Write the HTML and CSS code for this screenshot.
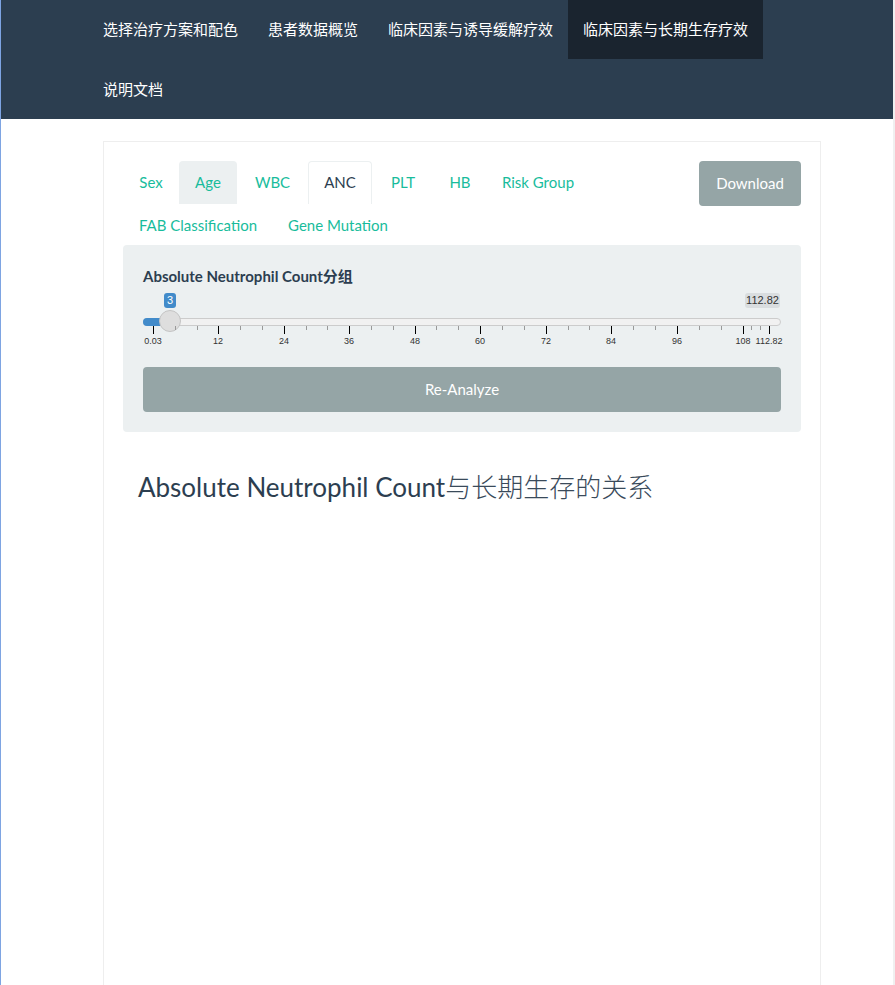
FILE: index.html
```html
<!DOCTYPE html>
<html lang="zh">
<head>
<meta charset="utf-8">
<title>临床因素与长期生存疗效</title>
<link rel="stylesheet" href="styles.css">
</head>
<body>
<nav class="navbar">
  <ul class="nav-list">
    <li><a href="#">选择治疗方案和配色</a></li>
    <li><a href="#">患者数据概览</a></li>
    <li><a href="#">临床因素与诱导缓解疗效</a></li>
    <li class="active"><a href="#">临床因素与长期生存疗效</a></li>
    <li><a href="#">说明文档</a></li>
  </ul>
</nav>
<main class="panel">
  <div class="tab-row">
    <ul class="tabs">
      <li class="t-sex"><a href="#">Sex</a></li>
      <li class="t-age hover"><a href="#">Age</a></li>
      <li class="t-wbc"><a href="#">WBC</a></li>
      <li class="t-anc active"><a href="#">ANC</a></li>
      <li class="t-plt"><a href="#">PLT</a></li>
      <li class="t-hb"><a href="#">HB</a></li>
      <li class="t-risk"><a href="#">Risk Group</a></li>
      <li class="t-fab"><a href="#">FAB Classification</a></li>
      <li class="t-gene"><a href="#">Gene Mutation</a></li>
    </ul>
    <button class="btn btn-download">Download</button>
  </div>
  <div class="well">
    <label class="control-label">Absolute Neutrophil Count分组</label>
    <div class="slider">
      <span class="badge badge-value" style="left:21px">3</span>
      <span class="badge badge-max">112.82</span>
      <div class="track"></div>
      <div class="bar" style="width:26px"></div>
      <div class="handle" style="left:16px"></div>
      <span class="tick major" style="left:10px"></span>
      <span class="tick minor" style="left:32px"></span>
      <span class="tick minor" style="left:54px"></span>
      <span class="tick major" style="left:75px"></span>
      <span class="tick minor" style="left:97px"></span>
      <span class="tick minor" style="left:119px"></span>
      <span class="tick major" style="left:141px"></span>
      <span class="tick minor" style="left:163px"></span>
      <span class="tick minor" style="left:184px"></span>
      <span class="tick major" style="left:206px"></span>
      <span class="tick minor" style="left:228px"></span>
      <span class="tick minor" style="left:250px"></span>
      <span class="tick major" style="left:272px"></span>
      <span class="tick minor" style="left:293px"></span>
      <span class="tick minor" style="left:315px"></span>
      <span class="tick major" style="left:337px"></span>
      <span class="tick minor" style="left:359px"></span>
      <span class="tick minor" style="left:381px"></span>
      <span class="tick major" style="left:403px"></span>
      <span class="tick minor" style="left:425px"></span>
      <span class="tick minor" style="left:446px"></span>
      <span class="tick major" style="left:468px"></span>
      <span class="tick minor" style="left:490px"></span>
      <span class="tick minor" style="left:512px"></span>
      <span class="tick major" style="left:534px"></span>
      <span class="tick minor" style="left:556px"></span>
      <span class="tick minor" style="left:578px"></span>
      <span class="tick major" style="left:600px"></span>
      <span class="tick minor" style="left:608px"></span>
      <span class="tick minor" style="left:617px"></span>
      <span class="tick major" style="left:626px"></span>
      <span class="grid-label" style="left:10px">0.03</span>
      <span class="grid-label" style="left:75px">12</span>
      <span class="grid-label" style="left:141px">24</span>
      <span class="grid-label" style="left:206px">36</span>
      <span class="grid-label" style="left:272px">48</span>
      <span class="grid-label" style="left:337px">60</span>
      <span class="grid-label" style="left:403px">72</span>
      <span class="grid-label" style="left:468px">84</span>
      <span class="grid-label" style="left:534px">96</span>
      <span class="grid-label" style="left:600px">108</span>
      <span class="grid-label" style="left:626px">112.82</span>
    </div>
    <button class="btn btn-block">Re-Analyze</button>
  </div>
  <h3 class="result-title">Absolute Neutrophil Count<span class="cjk">与长期生存的关系</span></h3>
</main>
</body>
</html>
```

FILE: styles.css
```css
* { box-sizing: border-box; }
html, body { margin: 0; padding: 0; }
body {
  font-family: "Lato", "Noto Sans CJK SC", sans-serif;
  font-size: 15px;
  color: #2c3e50;
  background: #fff;
  border-left: 1px solid #7ea4e2;
  border-right: 2px solid #f0f0f0;
  min-height: 985px;
  overflow: hidden;
}
a { text-decoration: none; }

.navbar {
  background: #2c3e50;
  height: 119px;
  padding-left: 87px;
}
.nav-list {
  list-style: none;
  margin: 0;
  padding: 0;
  display: flex;
  flex-wrap: wrap;
  width: 734px;
}
.nav-list li a {
  display: block;
  padding: 18px 15px 20px;
  line-height: 21px;
  color: #fff;
  font-size: 15px;
  font-family: "Noto Sans CJK SC", sans-serif;
}
.nav-list li:nth-child(-n+4) a { height: 59px; }
.nav-list li:nth-child(5) a { height: 60px; padding-top: 19px; }
.nav-list li.active a { background: #1a242f; }

.panel {
  margin: 22px 0 0 102px;
  width: 718px;
  min-height: 900px;
  border: 1px solid #eeeeee;
  border-bottom: none;
  padding: 19px 19px 0 19px;
}
.tab-row {
  display: flex;
  align-items: flex-start;
  justify-content: space-between;
}
.tabs {
  list-style: none;
  margin: 0;
  padding: 0;
  display: flex;
  flex-wrap: wrap;
  width: 560px;
}
.tabs li a {
  display: block;
  padding: 10px 0;
  text-align: center;
  line-height: 21.4px;
  height: 43px;
  color: #18bc9c;
  font-size: 15px;
  border: 1px solid transparent;
  border-bottom: none;
  border-radius: 4px 4px 0 0;
  white-space: nowrap;
}
.t-sex a { width: 56px; }
.t-age a { width: 58px; }
.t-wbc a { width: 71px; }
.t-anc a { width: 64px; }
.t-plt a { width: 62px; }
.t-hb a { width: 52px; }
.t-risk a { width: 104px; }
.t-fab a { width: 150px; }
.t-gene a { width: 130px; }
.tabs li.hover a { background: #ecf0f1; }
.tabs li.active a {
  color: #2c3e50;
  background: #fff;
  border-color: #ecf0f1;
}
.tabs li:nth-child(n+8) a { height: 41px; }

.btn {
  font-family: "Lato", sans-serif;
  font-size: 15px;
  color: #fff;
  background: #95a5a6;
  border: 2px solid #95a5a6;
  border-radius: 4px;
  line-height: 21.4px;
  padding: 10px 15px;
  cursor: pointer;
}
.btn-download { width: 102px; height: 45px; }

.well {
  background: #ecf0f1;
  border-radius: 4px;
  padding: 19px 20px 21px;
  height: 187px;
}
.control-label {
  display: block;
  font-weight: 700;
  font-size: 15px;
  line-height: 21px;
  margin: 2px 0 0;
  color: #2c3e50;
}
.slider {
  position: relative;
  height: 80px;
  margin-top: 0;
}
.track {
  position: absolute;
  left: 0; right: 0;
  top: 31px;
  height: 8px;
  background: #f1f1f1;
  border: 1px solid #cccccc;
  border-radius: 4px;
}
.bar {
  position: absolute;
  left: 0;
  top: 31px;
  height: 8px;
  background: #428bca;
  border-radius: 4px 0 0 4px;
}
.handle {
  position: absolute;
  top: 23px;
  width: 22px;
  height: 22px;
  border-radius: 50%;
  background: #dedede;
  border: 1px solid #c4c4c4;
}
.badge {
  position: absolute;
  top: 6px;
  font-family: "Liberation Sans", Arial, sans-serif;
  font-size: 11px;
  line-height: 15px;
  height: 15px;
  padding: 0 3px;
  border-radius: 3px;
}
.badge-value { background: #428bca; color: #fff; width: 12px; padding: 0; text-align: center; }
.badge-max { right: 1px; background: #d9dddf; color: #333; width: 35px; text-align: center; padding: 0; }
.tick {
  position: absolute;
  top: 39px;
  width: 1px;
}
.tick.major { height: 8px; background: #000; }
.tick.minor { height: 4px; background: #999; }
.grid-label {
  position: absolute;
  top: 48px;
  transform: translateX(-50%);
  font-family: "Liberation Sans", Arial, sans-serif;
  font-size: 9px;
  line-height: 12px;
  color: #333;
  white-space: nowrap;
}
.btn-block {
  display: block;
  width: 100%;
  height: 45px;
}

.result-title {
  font-family: "Lato", "Noto Sans CJK SC", sans-serif;
  font-weight: 400;
  font-size: 26px;
  line-height: 28.6px;
  color: #2c3e50;
  margin: 40px 0 0 15px;
}
.result-title .cjk {
  font-family: "Noto Sans CJK SC", sans-serif;
  font-weight: 300;
  color: #3a4a5a;
}
```
